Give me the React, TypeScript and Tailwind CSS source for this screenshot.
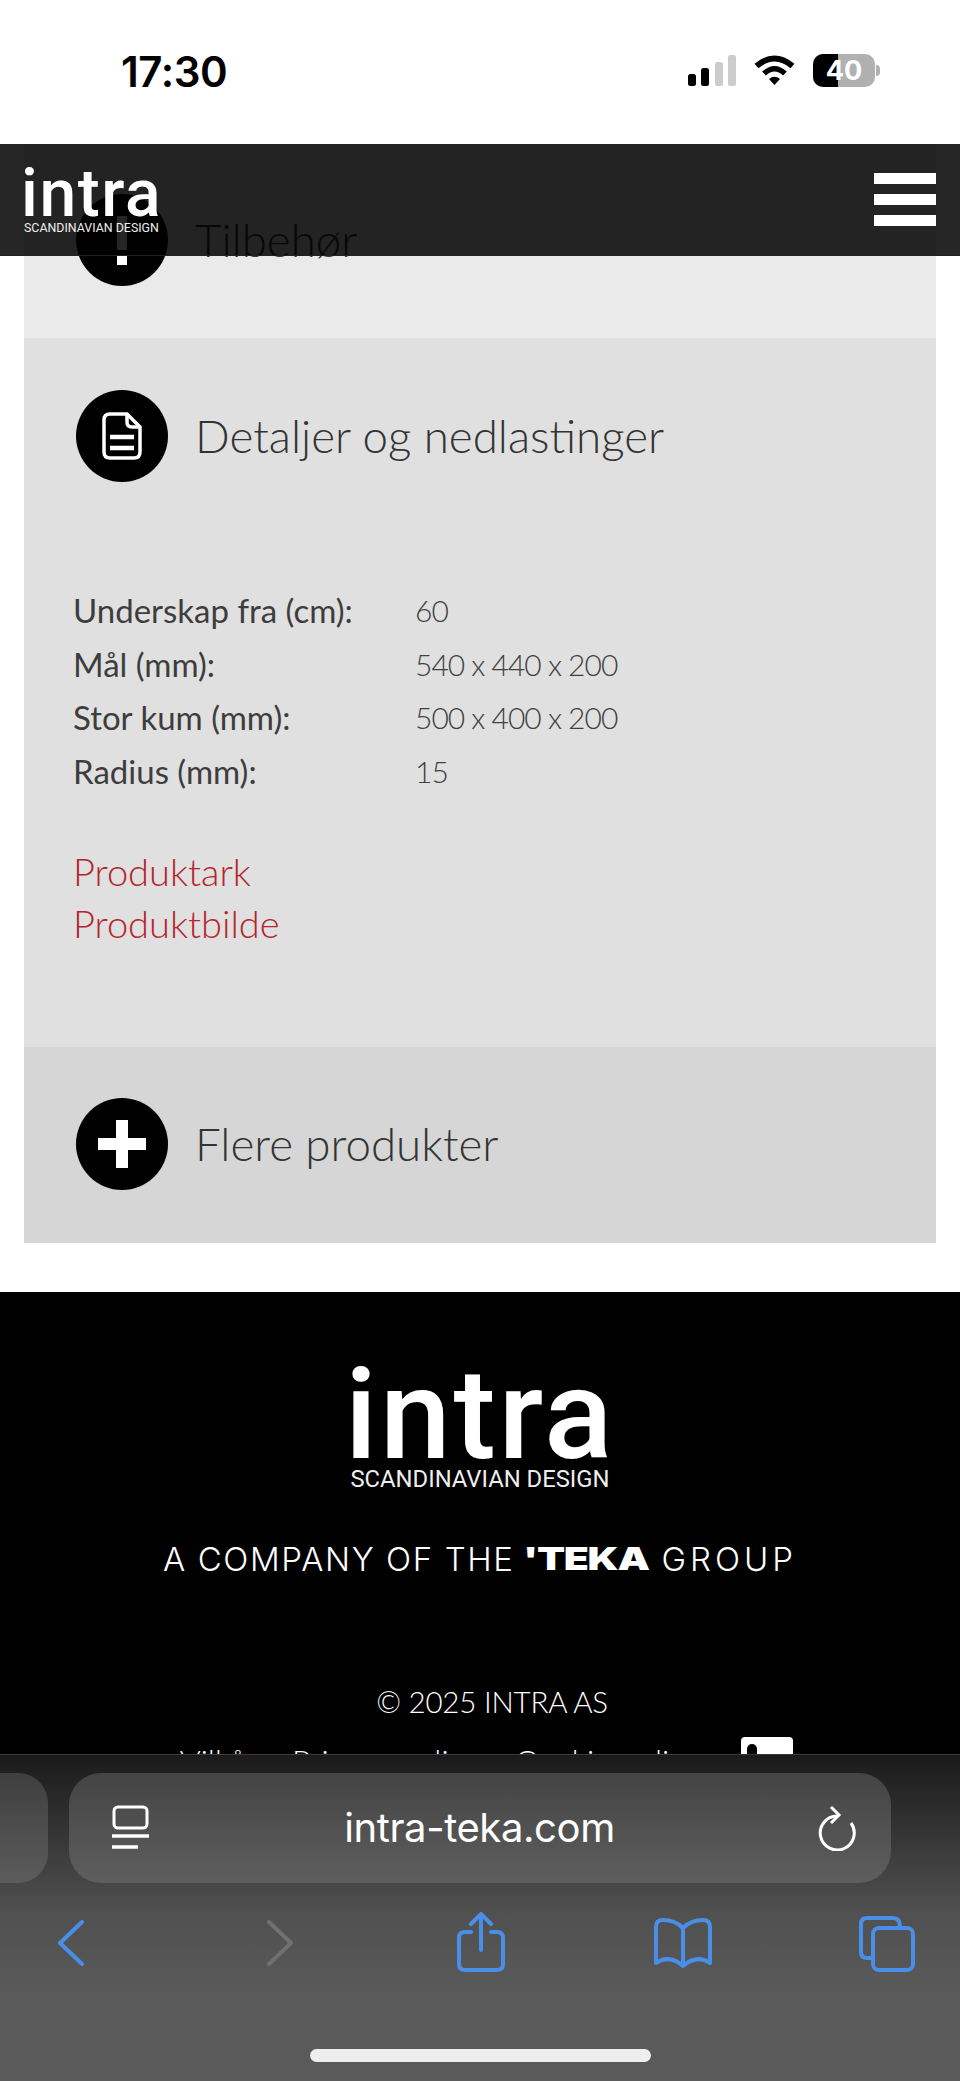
import React from "react";

function Circle({ children }: { children: React.ReactNode }) {
  return (
    <div className="w-[92px] h-[92px] rounded-full bg-black flex items-center justify-center shrink-0">
      {children}
    </div>
  );
}

function Heading({ icon, label }: { icon: React.ReactNode; label: string }) {
  return (
    <div className="flex items-center gap-[27px] ml-[52px]">
      <Circle>{icon}</Circle>
      <span className="font-['Lato'] font-light text-[45.7px] leading-[92px] text-[#333]">{label}</span>
    </div>
  );
}

function Spec({ k, v }: { k: string; v: string }) {
  return (
    <div className="flex h-[53.5px] items-center">
      <span className="w-[342px] font-['Lato'] text-[33px] text-[#3d3d3d]">{k}</span>
      <span className="font-['Lato'] font-light text-[30px] tracking-[-1px] text-[#404040]">{v}</span>
    </div>
  );
}

function Logo({ big }: { big?: boolean }) {
  return (
    <div className={big ? "flex flex-col items-center w-[260px]" : "flex flex-col items-start w-[134px]"}>
      <span
        className={
          big
            ? "font-['Roboto'] font-medium text-white text-[127px] leading-[100px] tracking-[2.8px]"
            : "font-['Roboto'] font-medium text-white text-[66px] leading-[52px] tracking-[1.6px] -ml-[3px]"
        }
      >
        intra
      </span>
      <span
        className={
          big
            ? "font-['Roboto'] text-[#eee] text-[23.8px] leading-[26px] mt-[1px] whitespace-nowrap"
            : "font-['Roboto'] text-[#eee] text-[12.4px] leading-[14px] mt-[1px] whitespace-nowrap"
        }
      >
        SCANDINAVIAN DESIGN
      </span>
    </div>
  );
}

export default function App() {
  return (
    <div className="w-[960px] h-[2081px] flex flex-col bg-white overflow-hidden">
      {/* status bar */}
      <div className="h-[144px] shrink-0 flex items-start justify-between pl-[121px] pr-[80px] pt-[47px]">
        <span className="font-['Inter'] font-semibold text-[42px] leading-[50px] text-black tracking-[-0.4px]">17:30</span>
        <div className="flex items-center gap-[18px] mt-[7px]">
          <svg width="48" height="31" viewBox="0 0 48 31">
            <rect x="0" y="19" width="8" height="12" rx="2.5" fill="#000" />
            <rect x="13" y="13" width="8" height="18" rx="2.5" fill="#000" />
            <rect x="27" y="7" width="8" height="24" rx="2.5" fill="#ccc" />
            <rect x="40" y="0" width="8" height="31" rx="2.5" fill="#ccc" />
          </svg>
          <svg width="41" height="31" viewBox="0 0 41 31">
            <path d="M2.5 11 Q20.5 -4 38.5 11" fill="none" stroke="#000" strokeWidth="6" />
            <path d="M10 18.5 Q20.5 9 31 18.5" fill="none" stroke="#000" strokeWidth="5.5" />
            <path d="M15 24 Q20.5 19.5 26 24 L20.5 30 Z" fill="#000" />
          </svg>
          <div className="flex items-center gap-[1px]">
            <div className="relative w-[62px] h-[33px] rounded-[10px] bg-[#b0b0b0] overflow-hidden flex items-center justify-center">
              <div className="absolute left-0 top-0 bottom-0 w-[25px] bg-black" />
              <span className="relative font-['Inter'] font-bold text-[27px] leading-none text-white">40</span>
            </div>
            <div className="w-[4px] h-[11px] rounded-r-full bg-[#b0b0b0]" />
          </div>
        </div>
      </div>

      {/* page */}
      <div className="relative flex-1 overflow-hidden">
        <div className="absolute left-0 right-0 top-0 h-[112px] bg-black/85 z-10 flex items-start justify-between pl-[24px] pr-[24px] border-b border-[#222]">
          <div className="mt-[24px]">
            <Logo />
          </div>
          <div className="mt-[29px] flex flex-col gap-[10px]">
            <div className="w-[62px] h-[11px] bg-white" />
            <div className="w-[62px] h-[11px] bg-white" />
            <div className="w-[62px] h-[11px] bg-white" />
          </div>
        </div>

        <div className="mx-[24px]">
          <section className="bg-[#eaeaea] h-[194px] pt-[50px]">
            <Heading
              label="Tilbehør"
              icon={
                <div className="flex flex-col items-center gap-[6px]">
                  <div className="w-[10px] h-[34px] bg-white" />
                  <div className="w-[10px] h-[9px] bg-white" />
                </div>
              }
            />
          </section>
          <section className="bg-[#e0e0e0] h-[709px] pt-[52px]">
            <Heading
              label="Detaljer og nedlastinger"
              icon={
                <svg width="40" height="48" viewBox="0 0 40 48" fill="none" stroke="#fff" strokeWidth="3.5">
                  <path d="M8 2 H25 L38 15 V40 Q38 46 32 46 H8 Q2 46 2 40 V8 Q2 2 8 2 Z" />
                  <path d="M25 2 V10 Q25 15 30 15 H38" />
                  <path d="M8 25 H32 M8 36 H32" strokeWidth="4.5" />
                </svg>
              }
            />
            <div className="ml-[49px] mt-[102px]">
              <Spec k="Underskap fra (cm):" v="60" />
              <Spec k="Mål (mm):" v="540 x 440 x 200" />
              <Spec k="Stor kum (mm):" v="500 x 400 x 200" />
              <Spec k="Radius (mm):" v="15" />
              <div className="mt-[47px] font-['Lato'] font-light text-[38px] leading-[52px] text-[#b5252c]">
                <div>Produktark</div>
                <div>Produktbilde</div>
              </div>
            </div>
          </section>
          <section className="bg-[#d6d6d6] h-[196px] pt-[51px]">
            <Heading
              label="Flere produkter"
              icon={
                <div className="relative w-[48px] h-[48px]">
                  <div className="absolute left-[18px] top-0 w-[12px] h-[48px] bg-white" />
                  <div className="absolute top-[18px] left-0 w-[48px] h-[12px] bg-white" />
                </div>
              }
            />
          </section>
        </div>

        <footer className="mt-[49px] bg-black h-[500px] flex flex-col items-center pt-[73px] text-white">
          <Logo big />
          <div className="mt-[47px] flex items-center font-['Inter'] font-light text-[33px] leading-[40px] whitespace-nowrap">
            <span className="tracking-[1.6px]">A COMPANY OF THE</span>
            <span className="inline-block w-[125px] ml-[9px] mr-[13px] origin-left scale-x-[1.28] font-['Inter'] font-black text-[32px] tracking-[-1px]">'TEKA</span>
            <span className="tracking-[4px]">GROUP</span>
          </div>
          <div className="mt-[103px] font-['Lato'] font-light text-[29.5px] tracking-[-0.2px] leading-[40px] pl-[24px]">© 2025 INTRA AS</div>
          <div className="relative mt-[19px] w-full flex justify-center gap-[35px] font-['Lato'] font-light text-[32px] leading-[40px] pr-[80px]">
            <span>Vilkår</span>
            <span>Privacy policy</span>
            <span>Cookie policy</span>
            <div className="absolute left-[741px] top-[-4px] w-[52px] h-[52px] bg-white rounded-[4px]">
              <div className="absolute left-[6px] top-[7px] w-[10px] h-[14px] rounded-full bg-black" />
            </div>
          </div>
        </footer>
      </div>

      {/* browser toolbar */}
      <div className="h-[327px] shrink-0 bg-[linear-gradient(to_bottom,#1a1a1a_0%,#505050_48%,#5a5a5a_75%)] border-t border-[#3a3a3a] relative">
        <div className="flex h-[110px] mt-[18px]">
          <div className="w-[48px] h-full rounded-r-[30px] bg-gradient-to-b from-[#3f3f3f] to-[#5c5c5c]" />
          <div className="ml-[21px] w-[822px] h-full rounded-[32px] bg-gradient-to-b from-[#444] to-[#5e5e5e] flex items-center justify-between pl-[43px] pr-[35px]">
            <svg width="37" height="46" viewBox="0 0 37 46" fill="none" stroke="#fff">
              <rect x="2" y="2" width="33" height="21" rx="4" strokeWidth="3" />
              <path d="M0 31 H37" strokeWidth="3.5" />
              <path d="M0 42 H26" strokeWidth="3.5" />
            </svg>
            <span className="font-['Inter'] text-[40px] leading-none text-white tracking-[-0.4px] mr-[8px]">intra-teka.com</span>
            <svg width="38" height="46" viewBox="0 0 38 46" fill="none" stroke="#fff" strokeWidth="3">
              <path d="M19 11 A17 17 0 1 0 33 18" />
              <path d="M13 2 L21 10 L13 18" />
            </svg>
          </div>
        </div>
        <div className="flex items-start mt-[29px] h-[62px]">
          <svg className="ml-[57px] mt-[8px]" width="27" height="46" viewBox="0 0 27 46" fill="none" stroke="#4a8fe7" strokeWidth="4" strokeLinecap="round" strokeLinejoin="round">
            <path d="M25 2 L3 23 L25 44" />
          </svg>
          <svg className="ml-[183px] mt-[8px]" width="27" height="46" viewBox="0 0 27 46" fill="none" stroke="#707070" strokeWidth="4" strokeLinecap="round" strokeLinejoin="round">
            <path d="M2 2 L24 23 L2 44" />
          </svg>
          <svg className="ml-[163px]" width="48" height="60" viewBox="0 0 48 60" fill="none" stroke="#4a8fe7" strokeWidth="4" strokeLinecap="round" strokeLinejoin="round">
            <path d="M14 20 H8 Q2 20 2 26 V52 Q2 58 8 58 H40 Q46 58 46 52 V26 Q46 20 40 20 H34" />
            <path d="M24 38 V3" />
            <path d="M14 12 L24 2 L34 12" />
          </svg>
          <svg className="ml-[148px] mt-[6px]" width="60" height="50" viewBox="0 0 60 50" fill="none" stroke="#4a8fe7" strokeWidth="4" strokeLinejoin="round">
            <path d="M30 10 Q22 2 10 2 Q3 2 3 9 V45 Q16 36 30 48 Q44 36 57 45 V9 Q57 2 50 2 Q38 2 30 10 Z" />
            <path d="M30 10 V48" />
          </svg>
          <svg className="ml-[146px] mt-[4px]" width="56" height="56" viewBox="0 0 56 56" fill="none" stroke="#4a8fe7" strokeWidth="4" strokeLinejoin="round">
            <path d="M14 42 H8 Q2 42 2 36 V8 Q2 2 8 2 H34 Q41 2 41 11" />
            <rect x="14" y="12" width="40" height="42" rx="6" />
          </svg>
        </div>
        <div className="absolute left-[310px] top-[294px] w-[341px] h-[13px] rounded-full bg-[#eee]" />
      </div>
    </div>
  );
}
